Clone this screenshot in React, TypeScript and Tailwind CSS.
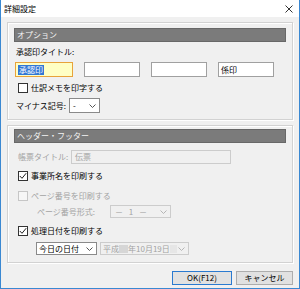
import React from 'react';

const Chevron = ({ color = '#8a8a8a' }: { color?: string }) => (
  <svg width="7" height="4" viewBox="0 0 7 4" className="shrink-0">
    <polyline points="0.5,0.5 3.5,3.5 6.5,0.5" fill="none" stroke={color} strokeWidth="1" />
  </svg>
);

const Checkbox = ({ checked = false, disabled = false }: { checked?: boolean; disabled?: boolean }) => (
  <span
    className={`w-[10px] h-[10px] border flex items-center justify-center shrink-0 ${
      disabled ? 'border-[#c6c6c6] bg-[#f6f6f6]' : 'border-[#333333] bg-white'
    }`}
  >
    {checked && (
      <svg width="8" height="8" viewBox="0 0 8 8">
        <polyline points="0.8,4 3,6.3 7.2,1.2" fill="none" stroke="#222222" strokeWidth="1" />
      </svg>
    )}
  </span>
);

const GroupHeader = ({ title }: { title: string }) => (
  <div className="h-[14px] bg-[#7b7b7b] border border-[#686868] text-[#f4f4f4] text-[8px] flex items-center pl-[2px]">
    {title}
  </div>
);

const CheckRow = ({ label, checked, disabled, className = '' }: { label: string; checked?: boolean; disabled?: boolean; className?: string }) => (
  <div className={`h-[16px] flex items-center gap-[3px] ml-[4px] ${className}`}>
    <Checkbox checked={checked} disabled={disabled} />
    <span className={disabled ? 'text-[#a3a3a3]' : 'text-black'}>{label}</span>
  </div>
);

const approvers = [
  { w: 'w-[58px]', text: '' },
  { w: 'w-[56px]', text: '' },
  { w: 'w-[56px]', text: '' },
  { w: 'w-[56px]', text: '係印' },
];

export default function App() {
  return (
    <div className="w-[300px] h-[289px] bg-[#f0f0f0] border-x border-b border-[#3a88d2] flex flex-col text-[8px] leading-none whitespace-nowrap text-black font-['Noto_Sans_CJK_JP','Noto_Sans',sans-serif]">
      {/* title bar */}
      <div className="h-[17px] bg-white flex items-center justify-between pl-[3px] pr-[6px] shrink-0">
        <span className="text-[8px]">詳細設定</span>
        <svg width="8" height="8" viewBox="0 0 8 8">
          <path d="M0.5 0.5 L7.5 7.5 M7.5 0.5 L0.5 7.5" stroke="#333333" strokeWidth="1" />
        </svg>
      </div>

      <div className="flex flex-col px-[6px] pt-[5px]">
        {/* オプション */}
        <div className="h-[98px] border border-[#d2d2d2] shadow-[inset_1px_1px_0_#ffffff,1px_1px_0_#ffffff] px-[6px] pt-[5px] flex flex-col">
          <GroupHeader title="オプション" />
          <div className="h-[16px] mt-[2px] flex items-center ml-[2px]">承認印タイトル:</div>
          <div className="h-[15px] mt-[2px] flex gap-[11px] ml-[1px]">
            <div className="w-[58px] h-full border border-[#e8a33a] bg-[#ffffc4] flex items-center pl-[2px]">
              <span className="bg-[#3277d4] text-white px-[1px] h-[10px] flex items-center">承認印</span>
            </div>
            {approvers.slice(1).map((a, i) => (
              <div key={i} className={`${a.w} h-full border border-[#a0a0a0] bg-white flex items-center pl-[2px]`}>
                {a.text}
              </div>
            ))}
          </div>
          <CheckRow label="仕訳メモを印字する" className="mt-[3px]" />
          <div className="h-[15px] mt-[2px] flex items-center ml-[2px]">
            <span className="w-[53px]">マイナス記号:</span>
            <div className="w-[31px] h-full border border-[#8a8a8a] bg-white flex items-center justify-between pl-[3px] pr-[3px]">
              <span>-</span>
              <Chevron color="#555555" />
            </div>
          </div>
        </div>

        {/* ヘッダー・フッター */}
        <div className="h-[138px] mt-[5px] border border-[#d2d2d2] shadow-[inset_1px_1px_0_#ffffff,1px_1px_0_#ffffff] px-[6px] pt-[3px] flex flex-col">
          <GroupHeader title="ヘッダー・フッター" />
          <div className="h-[14px] mt-[7px] flex items-center ml-[4px]">
            <span className="w-[53px] text-[#a3a3a3]">帳票タイトル:</span>
            <div className="w-[160px] h-full border border-[#cccccc] bg-[#f0f0f0] flex items-center pl-[3px] text-[#a3a3a3]">
              伝票
            </div>
          </div>
          <CheckRow label="事業所名を印刷する" checked className="mt-[4px]" />
          <CheckRow label="ページ番号を印刷する" disabled className="mt-[4px]" />
          <div className="h-[13px] mt-[1px] flex items-center ml-[23px]">
            <span className="w-[73px] text-[#a3a3a3]">ページ番号形式:</span>
            <div className="w-[61px] h-full border border-[#cccccc] bg-[#f0f0f0] flex items-center justify-between pl-[4px] pr-[3px] text-[#a3a3a3]">
              <span className="tracking-[2px]">－ 1 －</span>
              <Chevron color="#b5b5b5" />
            </div>
          </div>
          <CheckRow label="処理日付を印刷する" checked className="mt-[5px]" />
          <div className="h-[13px] mt-[3px] flex items-center ml-[22px] gap-[3px]">
            <div className="w-[61px] h-full border border-[#8a8a8a] bg-white flex items-center justify-between pl-[2px] pr-[3px]">
              <span>今日の日付</span>
              <Chevron color="#555555" />
            </div>
            <div className="w-[89px] h-full border border-[#cccccc] bg-[#f0f0f0] flex items-center justify-between pl-[2px] pr-[3px] text-[#a3a3a3]">
              <span className="flex items-center">
                <span>平成</span>
                <span className="w-[9px] h-[8px] bg-[#d6d6d6]" />
                <span>年10月19日</span>
                <span className="w-[7px] h-[8px] bg-[#e6e6e6]" />
              </span>
              <Chevron color="#b5b5b5" />
            </div>
          </div>
        </div>

        {/* buttons */}
        <div className="mt-[8px] flex justify-end gap-[4px]">
          <button className="w-[60px] h-[14px] border border-[#2a7ad0] bg-[#e1e1e1] text-[8px] flex items-center justify-center">
            OK(F12)
          </button>
          <button className="w-[57px] h-[14px] border border-[#adadad] bg-[#e1e1e1] text-[8px] flex items-center justify-center">
            キャンセル
          </button>
        </div>
      </div>
    </div>
  );
}
